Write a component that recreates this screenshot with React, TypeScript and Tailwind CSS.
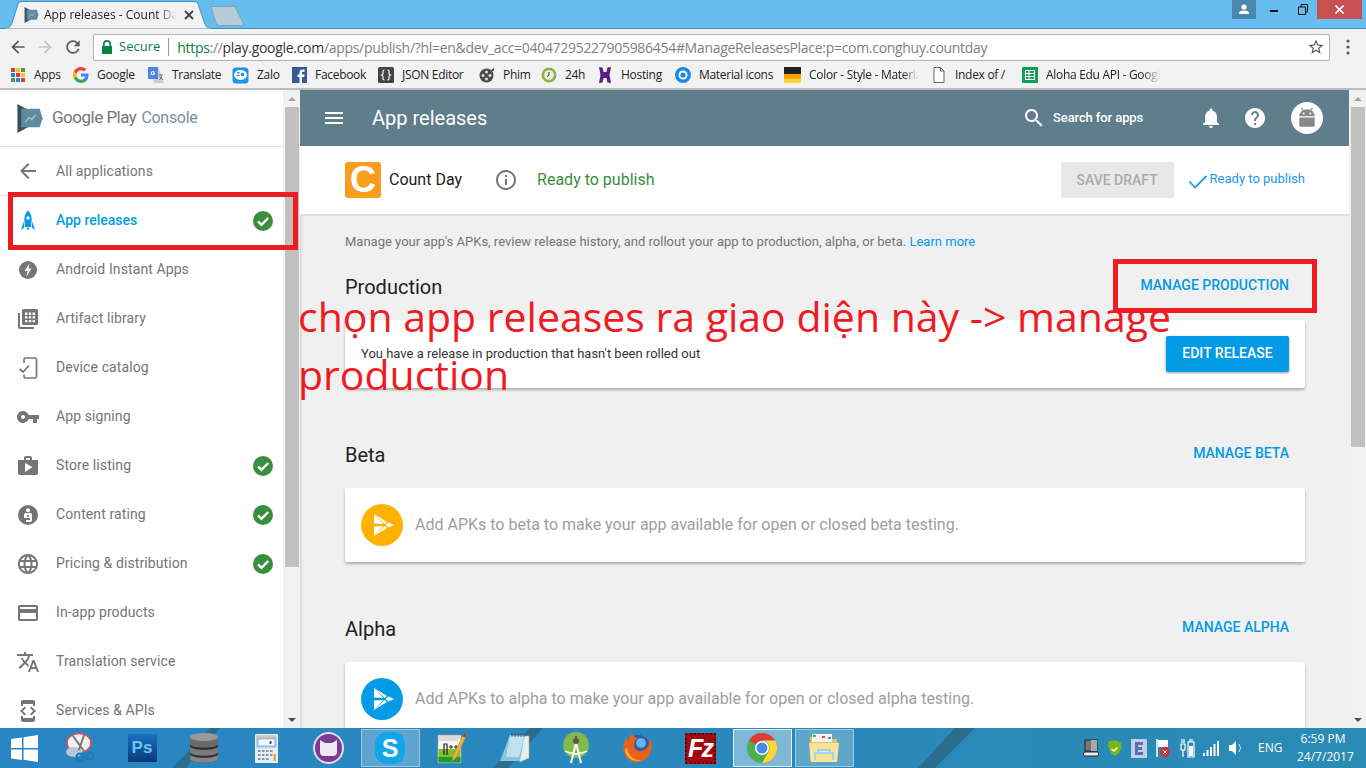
import { ReactNode } from "react";

const ui = "font-['Open_Sans','Noto_Sans',sans-serif]";
const roboto = "font-['Roboto',sans-serif]";

function Md({ d, className = "", size = 24 }: { d: string; className?: string; size?: number }) {
  return (
    <svg width={size} height={size} viewBox="0 0 24 24" fill="currentColor" className={className}>
      <path d={d} />
    </svg>
  );
}

const paths = {
  back: "M20 11H7.83l5.59-5.59L12 4l-8 8 8 8 1.41-1.41L7.83 13H20v-2z",
  key: "M12.65 10C11.83 7.67 9.61 6 7 6c-3.31 0-6 2.69-6 6s2.69 6 6 6c2.61 0 4.83-1.67 5.65-4H17v4h4v-4h2v-4H12.65zM7 14c-1.1 0-2-.9-2-2s.9-2 2-2 2 .9 2 2-.9 2-2 2z",
  shop: "M16 6V4c0-1.11-.89-2-2-2h-4c-1.11 0-2 .89-2 2v2H2v13c0 1.11.89 2 2 2h16c1.11 0 2-.89 2-2V6h-6zm-6-2h4v2h-4V4zM9 18V9l7.5 4L9 18z",
  globe:
    "M11.99 2C6.47 2 2 6.48 2 12s4.47 10 9.99 10C17.52 22 22 17.52 22 12S17.52 2 11.99 2zm6.93 6h-2.95c-.32-1.25-.78-2.45-1.38-3.56 1.84.63 3.37 1.91 4.33 3.56zM12 4.04c.83 1.2 1.48 2.53 1.91 3.96h-3.82c.43-1.43 1.08-2.76 1.91-3.96zM4.26 14C4.1 13.36 4 12.69 4 12s.1-1.36.26-2h3.38c-.08.66-.14 1.32-.14 2 0 .68.06 1.34.14 2H4.26zm.82 2h2.95c.32 1.25.78 2.45 1.38 3.56-1.84-.63-3.37-1.9-4.33-3.56zm2.95-8H5.08c.96-1.66 2.49-2.93 4.33-3.56C8.81 5.55 8.35 6.75 8.03 8zM12 19.96c-.83-1.2-1.48-2.53-1.91-3.96h3.82c-.43 1.43-1.08 2.76-1.91 3.96zM14.34 14H9.66c-.09-.66-.16-1.32-.16-2 0-.68.07-1.35.16-2h4.68c.09.65.16 1.32.16 2 0 .68-.07 1.34-.16 2zm.25 5.56c.6-1.11 1.06-2.31 1.38-3.56h2.95c-.96 1.65-2.49 2.93-4.33 3.56zM16.36 14c.08-.66.14-1.32.14-2 0-.68-.06-1.34-.14-2h3.38c.16.64.26 1.31.26 2s-.1 1.36-.26 2h-3.38z",
  card: "M20 4H4c-1.11 0-1.99.89-1.99 2L2 18c0 1.11.89 2 2 2h16c1.11 0 2-.89 2-2V6c0-1.11-.89-2-2-2zm0 14H4v-6h16v6zm0-10H4V6h16v2z",
  translate:
    "M12.87 15.07l-2.54-2.51.03-.03c1.74-1.94 2.98-4.17 3.71-6.53H17V4h-7V2H8v2H1v1.99h11.17C11.5 7.92 10.44 9.75 9 11.35 8.07 10.32 7.3 9.19 6.69 8h-2c.73 1.63 1.73 3.17 2.98 4.56l-5.09 5.02L4 19l5-5 3.11 3.11.76-2.04zM18.5 10h-2L12 22h2l1.12-3h4.75L21 22h2l-4.5-12zm-2.62 7l1.62-4.33L19.12 17h-3.24z",
  dev: "M7 5h10v2h2V3c0-1.1-.9-1.99-2-1.99L7 1c-1.1 0-2 .9-2 2v4h2V5zm8.41 11.59L20 12l-4.59-4.59L14 8.83 17.17 12 14 15.17l1.41 1.42zM10 15.17L6.83 12 10 8.83 8.59 7.41 4 12l4.59 4.59L10 15.17zM17 19H7v-2H5v4c0 1.1.9 2 2 2h10c1.1 0 2-.9 2-2v-4h-2v2z",
  menu: "M3 18h18v-2H3v2zm0-5h18v-2H3v2zm0-7v2h18V6H3z",
  search:
    "M15.5 14h-.79l-.28-.27C15.41 12.59 16 11.11 16 9.5 16 5.91 13.09 3 9.5 3S3 5.91 3 9.5 5.91 16 9.5 16c1.61 0 3.09-.59 4.23-1.57l.27.28v.79l5 4.99L20.49 19l-4.99-5zm-6 0C7.01 14 5 11.99 5 9.5S7.01 5 9.5 5 14 7.01 14 9.5 11.99 14 9.5 14z",
  bell: "M12 22c1.1 0 2-.9 2-2h-4c0 1.1.89 2 2 2zm6-6v-5c0-3.07-1.64-5.64-4.5-6.32V4c0-.83-.67-1.5-1.5-1.5s-1.5.67-1.5 1.5v.68C7.63 5.36 6 7.92 6 11v5l-2 2v1h16v-1l-2-2z",
  help: "M12 2C6.48 2 2 6.48 2 12s4.48 10 10 10 10-4.48 10-10S17.52 2 12 2zm1 17h-2v-2h2v2zm2.07-7.75l-.9.92C13.45 12.9 13 13.5 13 15h-2v-.5c0-1.1.45-2.1 1.17-2.83l1.24-1.26c.37-.36.59-.86.59-1.41 0-1.1-.9-2-2-2s-2 .9-2 2H8c0-2.21 1.79-4 4-4s4 1.79 4 4c0 .88-.36 1.68-.93 2.25z",
  info: "M11 17h2v-6h-2v6zm1-15C6.48 2 2 6.48 2 12s4.48 10 10 10 10-4.48 10-10S17.52 2 12 2zm0 18c-4.41 0-8-3.59-8-8s3.59-8 8-8 8 3.59 8 8-3.59 8-8 8zM11 9h2V7h-2v2z",
  reload:
    "M17.65 6.35C16.2 4.9 14.21 4 12 4c-4.42 0-7.99 3.58-7.99 8s3.57 8 7.99 8c3.73 0 6.84-2.55 7.73-6h-2.08c-.82 2.33-3.04 4-5.65 4-3.31 0-6-2.69-6-6s2.69-6 6-6c1.66 0 3.14.69 4.22 1.78L13 11h7V4l-2.35 2.35z",
  arrowFwd: "M12 4l-1.41 1.41L16.17 11H4v2h12.17l-5.58 5.59L12 20l8-8z",
  star: "M22 9.24l-7.19-.62L12 2 9.19 8.63 2 9.24l5.46 4.73L5.82 21 12 17.27 18.18 21l-1.63-7.03L22 9.24zM12 15.4l-3.76 2.27 1-4.28-3.32-2.88 4.38-.38L12 6.1l1.71 4.04 4.38.38-3.32 2.88 1 4.28L12 15.4z",
};

function PlayLogo({ className }: { className: string }) {
  return (
    <svg viewBox="0 0 26 30" className={className}>
      <path d="M0 0 L26 14.5 L26 15.5 L0 30 Z" fill="#37505e" />
      <path d="M4 5 L23 5 L26 15 L23 24 L4 24 Z" fill="#5f8aa0" />
      <path d="M8 19 L12 14 L15 16 L19 11" fill="none" stroke="#9cc0d0" strokeWidth="1.6" />
    </svg>
  );
}

function RocketIcon() {
  return (
    <svg width="24" height="24" viewBox="0 0 24 24" fill="#039be5">
      <path d="M12 1.5 C15 4 16 8 15.6 12 L15 18 H9 L8.4 12 C8 8 9 4 12 1.5Z" />
      <circle cx="12" cy="9" r="1.7" fill="#fff" />
      <path d="M7.6 12.5 L8.4 18.5 L5 21 Z M16.4 12.5 L15.6 18.5 L19 21 Z M10.4 19 H13.6 L12 21.5 Z" />
    </svg>
  );
}

function BoltIcon() {
  return (
    <svg width="24" height="24" viewBox="0 0 24 24">
      <circle cx="12" cy="12" r="9" fill="#757575" />
      <path d="M13.5 5.5 L8.5 13 H11.5 L10.5 18.5 L15.5 10.5 H12.5 Z" fill="#fff" />
    </svg>
  );
}

function LibraryIcon() {
  return (
    <svg width="24" height="24" viewBox="0 0 24 24">
      <path d="M4 6H2v14c0 1.1.9 2 2 2h14v-2H4V6z" fill="#757575" />
      <rect x="6" y="2" width="16" height="16" rx="1.5" fill="#757575" />
      <path d="M9 5.5h2.4v2.4H9zM12.8 5.5h2.4v2.4h-2.4zM16.6 5.5H19v2.4h-2.4zM9 9.2h2.4v2.4H9zM12.8 9.2h2.4v2.4h-2.4zM16.6 9.2H19v2.4h-2.4zM9 12.9h2.4v2.4H9zM12.8 12.9h2.4v2.4h-2.4zM16.6 12.9H19v2.4h-2.4z" fill="#fff" />
    </svg>
  );
}

function DeviceIcon() {
  return (
    <svg width="24" height="24" viewBox="0 0 24 24" fill="none" stroke="#757575" strokeWidth="1.7">
      <path d="M8 7V3.5 C8 2.8 8.5 2 9.5 2 H19 C20 2 20.5 2.8 20.5 3.5 V20.5 C20.5 21.3 20 22 19 22 H9.5 C8.5 22 8 21.3 8 20.5 V18.5" />
      <path d="M3.5 13 L7 16 L13 9.5" />
    </svg>
  );
}

function RatingIcon() {
  return (
    <svg width="24" height="24" viewBox="0 0 24 24">
      <circle cx="12" cy="12" r="10" fill="#757575" />
      <circle cx="12" cy="7.2" r="2" fill="#fff" />
      <path d="M8 15 V11.5 C8 10.5 9 10 10 10 H14 C15 10 16 10.5 16 11.5 V17 C16 18.5 15 19 14 19 H10 V17 H14 V15 Z" fill="#fff" />
      <circle cx="12" cy="13" r="1.1" fill="#757575" />
    </svg>
  );
}

function CheckBadge() {
  return (
    <svg width="20" height="20" viewBox="0 0 20 20">
      <circle cx="10" cy="10" r="10" fill="#388e3c" />
      <path d="M5 10.4 L8.5 13.8 L15.2 7" fill="none" stroke="#fff" strokeWidth="2.4" />
    </svg>
  );
}

function PlayBadge({ color }: { color: string }) {
  return (
    <svg width="42" height="42" viewBox="0 0 42 42" className="shrink-0">
      <circle cx="21" cy="21" r="21" fill={color} />
      <path d="M13 10 L22.5 20 L13 19.5 Z M13 32 L22.5 22 L13 22.5 Z M13 10 L26 18 L23.8 20 Z M13 32 L26 24 L23.8 22 Z M24.5 21 L27.5 18.5 L33 21 L27.5 23.5 Z" fill="#fff" />
    </svg>
  );
}

const sideItems: { label: string; icon: ReactNode; done?: boolean }[] = [
  { label: "Android Instant Apps", icon: <BoltIcon /> },
  { label: "Artifact library", icon: <LibraryIcon /> },
  { label: "Device catalog", icon: <DeviceIcon /> },
  { label: "App signing", icon: <Md d={paths.key} /> },
  { label: "Store listing", icon: <Md d={paths.shop} />, done: true },
  { label: "Content rating", icon: <RatingIcon />, done: true },
  { label: "Pricing & distribution", icon: <Md d={paths.globe} />, done: true },
  { label: "In-app products", icon: <Md d={paths.card} /> },
  { label: "Translation service", icon: <Md d={paths.translate} /> },
  { label: "Services & APIs", icon: <Md d={paths.dev} /> },
];

function Svg16({ children }: { children: ReactNode }) {
  return (
    <svg width="16" height="16" viewBox="0 0 16 16" className="shrink-0">
      {children}
    </svg>
  );
}

const bookmarks: { label: string; w: string; icon: ReactNode; fade?: boolean }[] = [
  {
    label: "Apps",
    w: "w-[27px]",
    icon: (
      <Svg16>
        <path d="M1 1h4v4H1z" fill="#e53935" />
        <path d="M6 1h4v4H6z" fill="#fbc02d" />
        <path d="M11 1h4v4h-4z" fill="#43a047" />
        <path d="M1 6h4v4H1z" fill="#1e88e5" />
        <path d="M6 6h4v4H6z" fill="#e53935" />
        <path d="M11 6h4v4h-4z" fill="#fbc02d" />
        <path d="M1 11h4v4H1z" fill="#43a047" />
        <path d="M6 11h4v4H6z" fill="#1e88e5" />
        <path d="M11 11h4v4h-4z" fill="#e53935" />
      </Svg16>
    ),
  },
  {
    label: "Google",
    w: "w-[39px]",
    icon: (
      <Svg16>
        <path d="M15.5 8.2c0-.6-.1-1.1-.2-1.6H8v3h4.2c-.2 1-.7 1.8-1.6 2.4v2h2.6c1.5-1.4 2.3-3.4 2.3-5.8z" fill="#4285f4" />
        <path d="M8 16c2.2 0 4-.7 5.2-2l-2.6-2c-.7.5-1.5.8-2.6.8-2 0-3.8-1.4-4.4-3.2H.9v2C2.2 14.2 4.9 16 8 16z" fill="#34a853" />
        <path d="M3.6 9.6c-.3-1-.3-2.2 0-3.2v-2H.9c-1.2 2.2-1.2 5 0 7.2z" fill="#fbbc05" />
        <path d="M8 3.2c1.2 0 2.2.4 3 1.2l2.3-2.3C11.9.8 10.1 0 8 0 4.9 0 2.2 1.8.9 4.4l2.7 2c.6-1.8 2.4-3.2 4.4-3.2z" fill="#ea4335" />
      </Svg16>
    ),
  },
  {
    label: "Translate",
    w: "w-[48px]",
    icon: (
      <Svg16>
        <path d="M0 0h10l6 16H6z" fill="#c9ccd1" />
        <path d="M0 0h10v12H0z" fill="#4a86e8" />
        <path d="M7 5.5H5v1.2h1c-.2.7-1.8.8-2 0-.4-1 .2-2 1-2 .4 0 .7.1.9.3l.8-.7C5.2 3.4 3 4 2.8 6 2.7 8 5 9 6.3 7.7 7 7 7 6.3 7 5.5z" fill="#fff" />
        <path d="M11 8h4M13 7v1M11.5 13l2.5-4M12 9.5l3 3.5" stroke="#666" strokeWidth=".9" fill="none" />
      </Svg16>
    ),
  },
  {
    label: "Zalo",
    w: "w-[22px]",
    icon: (
      <svg width="17" height="17" viewBox="0 0 17 17" className="shrink-0">
        <rect x=".5" y=".5" width="16" height="16" rx="3.5" fill="#1b96e8" />
        <ellipse cx="8.5" cy="8" rx="6.5" ry="5" fill="#fff" />
        <path d="M5 5h3L6 8h2v1H4.5l2-3H5z" fill="#1b96e8" />
        <path d="M9 6h3v3H9z" fill="#1b96e8" />
      </svg>
    ),
  },
  {
    label: "Facebook",
    w: "w-[51px]",
    icon: (
      <Svg16>
        <rect x="1" y="0" width="15" height="16" fill="#3b5998" />
        <path d="M11 16V10h2.2l.3-2.5H11V6c0-.8.3-1.2 1.2-1.2h1.4V2.5h-2C9.5 2.5 8.5 3.7 8.5 5.7v1.8h-2V10h2v6z" fill="#fff" />
      </Svg16>
    ),
  },
  {
    label: "JSON Editor",
    w: "w-[65px]",
    icon: (
      <Svg16>
        <rect width="16" height="16" rx="1.5" fill="#444" />
        <path d="M6.5 3c-2 0-1.500 1.500-1.500 3 0 1-.5 1.800-1.200 2 .7.200 1.200 1 1.200 2 0 1.500-.5 3 1.500 3M9.500 3c2 0 1.500 1.500 1.500 3 0 1 .5 1.800 1.200 2-.7.200-1.200 1-1.200 2 0 1.500.5 3-1.500 3" fill="none" stroke="#fff" strokeWidth="1.2" />
      </Svg16>
    ),
  },
  {
    label: "Phim",
    w: "w-[26px]",
    icon: (
      <Svg16>
        <circle cx="7.5" cy="8.5" r="7" fill="#4a4a4a" />
        <circle cx="7.5" cy="5" r="1.5" fill="#ddd" />
        <circle cx="7.5" cy="12" r="1.5" fill="#ddd" />
        <circle cx="4" cy="8.5" r="1.5" fill="#ddd" />
        <circle cx="11" cy="8.5" r="1.5" fill="#ddd" />
        <path d="M12 3l3-2v2.5l-2 1z" fill="#4a4a4a" />
      </Svg16>
    ),
  },
  {
    label: "24h",
    w: "w-[20px]",
    icon: (
      <Svg16>
        <circle cx="8" cy="8" r="7.5" fill="#8bb547" />
        <circle cx="8" cy="8" r="4.8" fill="#f0f2e4" />
        <path d="M8 5v3.2l-2 1.2" stroke="#333" fill="none" />
      </Svg16>
    ),
  },
  {
    label: "Hosting",
    w: "w-[42px]",
    icon: (
      <Svg16>
        <path d="M2 0l3.5.5L6.500 5h3l1-4.500L14 0l-1.500 8L14 16l-3.500-.5-1-4.500h-3l-1 4.500L2 16l1.500-8z" fill="#5b1f8a" />
      </Svg16>
    ),
  },
  {
    label: "Material icons",
    w: "w-[73px]",
    icon: (
      <Svg16>
        <circle cx="8" cy="8" r="8" fill="#1e88e5" />
        <circle cx="8" cy="8" r="4.5" fill="#fff" />
        <circle cx="8" cy="8" r="2.6" fill="#1e88e5" />
      </Svg16>
    ),
  },
  {
    label: "Color - Style - Material",
    w: "w-[110px]",
    fade: true,
    icon: (
      <svg width="17" height="16" viewBox="0 0 17 16" className="shrink-0">
        <path d="M0 0h17v7H0z" fill="#212121" />
        <path d="M0 7h17v5H0z" fill="#ffa000" />
        <path d="M0 12h17v4H0z" fill="#fdd835" />
      </svg>
    ),
  },
  {
    label: "Index of /",
    w: "w-[55px]",
    icon: (
      <Svg16>
        <path d="M3 .5h6.5L13 4v11.500H3zM9.500.5V4H13" fill="#fff" stroke="#666" />
      </Svg16>
    ),
  },
  {
    label: "Aloha Edu API - Google Sheets",
    w: "w-[114px]",
    fade: true,
    icon: (
      <Svg16>
        <rect width="16" height="16" rx="1" fill="#0f9d58" />
        <path d="M3.5 3.5h9v9h-9zM3.5 6.500h9M3.500 9.500h9M7 3.500v9" fill="none" stroke="#fff" strokeWidth="1.1" />
      </Svg16>
    ),
  },
];

function TitleBar() {
  return (
    <div className="h-[29px] shrink-0 bg-[#66bdf0] border-b border-[#4a8db5] flex relative">
      <div className="ml-[5px] mt-[1px] w-[207px] h-[28px] relative z-10">
        <svg width="207" height="28" viewBox="0 0 207 28" className="absolute left-0 top-0">
          <path d="M0 27.5 C4 27.5 6 25 7 22 L13 3 Q14 .5 17 .5 L189 .5 Q192 .5 193 3 L200 23 Q201.5 27.5 206 27.5 Z" fill="#f2f2f2" stroke="#4a8db5" />
          <path d="M1 28H205" stroke="#f2f2f2" />
        </svg>
        <div className="relative flex items-center h-full pl-[19px]">
          <PlayLogo className="w-[15px] h-[16px] shrink-0" />
          <span className={`${ui} text-[12px] text-[#222] ml-[5px] w-[133px] whitespace-nowrap overflow-hidden [mask-image:linear-gradient(to_right,black_85%,transparent)]`}>
            App releases - Count Day
          </span>
          <svg width="10" height="10" viewBox="0 0 10 10" className="ml-[7px]">
            <path d="M1 1l8 8M9 1l-8 8" stroke="#444" strokeWidth="1.8" />
          </svg>
        </div>
      </div>
      <svg width="36" height="20" viewBox="0 0 36 20" className="ml-[-2px] mt-[6px]">
        <path d="M1 .5H23Q25 .5 26 2.5L33 17Q34 19.5 31 19.5H9Q7 19.5 6 17Z" fill="#b6cbd9" stroke="#7da3bb" />
      </svg>
      <div className="ml-auto flex items-start">
        <div className="w-[24px] h-[19px] bg-[#4a89ad] flex items-center justify-center">
          <svg width="10" height="11" viewBox="0 0 10 11" fill="#fff">
            <circle cx="5" cy="3" r="2.6" />
            <path d="M0 10c0-3 2-3.5 5-3.5s5 .5 5 3.5z" />
          </svg>
        </div>
        <div className="w-[30px] h-[19px] ml-[3px] flex items-center justify-center">
          <div className="w-[8px] h-[2px] bg-[#111] mt-[3px]" />
        </div>
        <div className="w-[28px] h-[19px] flex items-center justify-center">
          <svg width="10" height="11" viewBox="0 0 10 11" fill="none" stroke="#111">
            <path d="M.5 3h7v7.5h-7zM3 3V.5h6.500V8H8" />
          </svg>
        </div>
        <div className="w-[45px] h-[19px] mr-[4px] bg-[#c75050] flex items-center justify-center">
          <svg width="9" height="9" viewBox="0 0 9 9">
            <path d="M.5.5l8 8M8.5.5l-8 8" stroke="#fff" strokeWidth="1.6" />
          </svg>
        </div>
      </div>
    </div>
  );
}

function Toolbar() {
  return (
    <div className="h-[33px] shrink-0 bg-[#f2f2f2] flex items-center relative pt-[3px]">
      <Md d={paths.back} size={20} className="ml-[8px] text-[#5a5a5a]" />
      <Md d={paths.arrowFwd} size={20} className="ml-[7px] text-[#c4c4c4]" />
      <Md d={paths.reload} size={20} className="ml-[8px] text-[#5a5a5a]" />
      <div className="ml-[10px] w-[1237px] h-[27px] bg-white border border-[#b4b4b4] rounded-[2px] flex items-center">
        <svg width="12" height="14" viewBox="0 0 12 14" className="ml-[7px] shrink-0" fill="#0b8043">
          <path d="M2 6V4a4 4 0 0 1 8 0v2h1v8H1V6zm1.7 0h4.6V4a2.3 2.3 0 0 0-4.600 0z" />
        </svg>
        <span className={`${ui} text-[13px] text-[#0b8043] ml-[6px]`}>Secure</span>
        <div className="w-px h-[18px] bg-[#9a9a9a] ml-[8px]" />
        <span className={`${ui} text-[14px] tracking-[-0.3px] text-[#808080] ml-[8px] whitespace-nowrap`}>
          <span className="text-[#0b8043]">https</span>://<span className="text-[#333]">play.google.com</span>/apps/publish/?hl=en&amp;dev_acc=04047295227905986454#ManageReleasesPlace:p=com.conghuy.countday
        </span>
        <Md d={paths.star} size={18} className="ml-auto mr-[4px] text-[#5a5a5a]" />
      </div>
      <svg width="4" height="16" viewBox="0 0 4 16" fill="#5a5a5a" className="ml-[16px]">
        <circle cx="2" cy="2" r="1.6" />
        <circle cx="2" cy="8" r="1.6" />
        <circle cx="2" cy="14" r="1.6" />
      </svg>
    </div>
  );
}

function BookmarksBar() {
  return (
    <div className="h-[28px] shrink-0 bg-[#f2f2f2] border-b-2 border-[#bdbdbd] flex items-center pl-[10px] gap-[12px]">
      {bookmarks.map((b) => (
        <div key={b.label} className="flex items-center gap-[8px]">
          {b.icon}
          <span
            className={`${ui} text-[12px] tracking-[-0.3px] text-[#222] whitespace-nowrap ${b.w} ${
              b.fade ? "overflow-hidden [mask-image:linear-gradient(to_right,black_85%,transparent)]" : ""
            }`}
          >
            {b.label}
          </span>
        </div>
      ))}
    </div>
  );
}

function Scrollbar({ thumb }: { thumb: string }) {
  return (
    <div className="w-[17px] shrink-0 bg-[#f1f1f1] flex flex-col items-center">
      <div className="h-[17px] flex items-center justify-center">
        <div className="w-0 h-0 border-x-[4px] border-x-transparent border-b-[4px] border-b-[#a3a3a3]" />
      </div>
      <div className={`w-[14px] bg-[#c1c1c1] ${thumb}`} />
      <div className="flex-1" />
      <div className="h-[17px] flex items-center justify-center">
        <div className="w-0 h-0 border-x-[4px] border-x-transparent border-t-[4px] border-t-[#505050]" />
      </div>
    </div>
  );
}

function SideRow({ label, icon, done, active }: { label: string; icon: ReactNode; done?: boolean; active?: boolean }) {
  return (
    <div className="h-[49px] shrink-0 flex items-center pl-[16px] pr-[10px]">
      <div className="w-[24px] h-[24px] shrink-0 text-[#757575]">{icon}</div>
      <span className={`ml-[16px] text-[14px] ${active ? "text-[#039be5] font-medium" : "text-[#757575] tracking-[0.1px]"}`}>{label}</span>
      {done && <div className="ml-auto"><CheckBadge /></div>}
    </div>
  );
}

function Sidebar() {
  return (
    <div className={`${roboto} w-[300px] shrink-0 flex bg-white`}>
      <div className="w-[283px] flex flex-col overflow-hidden">
        <div className="h-[57px] shrink-0 border-b border-[#e0e0e0] flex items-center pl-[17px]">
          <PlayLogo className="w-[26px] h-[29px] shrink-0" />
          <span className="ml-[9px] text-[17px] tracking-[-0.5px] text-[#757575]">Google Play</span>
          <span className="ml-[5px] text-[16px] tracking-[-0.3px] text-[#78909c]">Console</span>
        </div>
        <div className="h-[49px] shrink-0 border-b border-[#e0e0e0] flex items-center pl-[16px]">
          <Md d={paths.back} className="text-[#757575]" />
          <span className="ml-[16px] text-[14px] tracking-[0.1px] text-[#757575]">All applications</span>
        </div>
        <SideRow label="App releases" icon={<RocketIcon />} done active />
        {sideItems.map((i) => (
          <SideRow key={i.label} {...i} />
        ))}
      </div>
      <Scrollbar thumb="h-[460px]" />
    </div>
  );
}

function Section({ title, manage, gap, children }: { title: string; manage: string; gap: string; children: ReactNode }) {
  return (
    <div className={gap}>
      <div className="h-[24px] flex items-center justify-between pr-[16px]">
        <span className="text-[20px] text-[#212121] relative top-px">{title}</span>
        <span className="text-[14px] font-medium text-[#039be5] mb-[2px]">{manage}</span>
      </div>
      <div className="mt-[22px] bg-white rounded-[2px] shadow-[0_2px_3px_rgba(0,0,0,0.28)] flex items-center px-[16px]">
        {children}
      </div>
    </div>
  );
}

function Main() {
  return (
    <div className={`${roboto} flex-1 min-w-0 flex flex-col bg-[#f0f0f0] shadow-[inset_3px_0_3px_-2px_rgba(0,0,0,0.15)]`}>
      <div className="h-[56px] shrink-0 bg-[#607d8b] flex items-center pl-[22px] pr-[26px] text-white">
        <Md d={paths.menu} />
        <span className="ml-[26px] text-[20px]">App releases</span>
        <Md d={paths.search} className="ml-auto" />
        <span className="ml-[7px] text-[13px] font-medium tracking-[-0.1px] w-[91px]">Search for apps</span>
        <Md d={paths.bell} className="ml-[55px]" />
        <Md d={paths.help} className="ml-[20px]" />
        <div className="ml-[24px] w-[32px] h-[32px] rounded-full bg-white flex items-center justify-center">
          <svg width="22" height="22" viewBox="0 0 20 20" fill="#888">
            <path d="M3 8.5a7 6.5 0 0 1 14 0z" />
            <path d="M3 9.5h14v7q0 1.5-1.5 1.5h-11Q3 18 3 16.5z" />
            <path d="M5 .8l2 3M15 .8l-2 3" stroke="#888" />
            <circle cx="7" cy="6" r=".9" fill="#fff" />
            <circle cx="13" cy="6" r=".9" fill="#fff" />
          </svg>
        </div>
      </div>
      <div className="h-[70px] shrink-0 bg-white border-b-2 border-[#e0e0e0] flex items-center pl-[45px] pr-[44px]">
        <div className="w-[36px] h-[36px] rounded-[3px] bg-[#f99d1f] flex items-center justify-center overflow-hidden">
          <span className="font-['Liberation_Sans',sans-serif] font-bold text-[36px] leading-none text-white">C</span>
        </div>
        <span className="ml-[8px] text-[16px] text-[#212121]">Count Day</span>
        <Md d={paths.info} className="ml-[32px] text-[#757575]" />
        <span className="ml-[19px] text-[16px] text-[#388e3c]">Ready to publish</span>
        <div className="ml-auto w-[113px] h-[36px] rounded-[2px] bg-[#e8e8e8] flex items-center justify-center text-[14px] font-medium text-[#aaaaaa]">
          SAVE DRAFT
        </div>
        <svg width="20" height="20" viewBox="0 0 20 20" className="ml-[14px] mt-[2px]" fill="none" stroke="#2196f3" strokeWidth="1.8">
          <path d="M1.5 10.5 L7 16.5 L18.5 5" />
        </svg>
        <span className="ml-[2px] text-[13px] text-[#2196f3] mb-[2px]">Ready to publish</span>
      </div>
      <div className="pl-[45px] pr-[44px] pt-[18px] overflow-hidden flex-1">
        <div className="text-[13px] leading-[16px] text-[#757575]">
          Manage your app's APKs, review release history, and rollout your app to production, alpha, or beta.{" "}
          <span className="text-[#039be5]">Learn more</span>
        </div>
        <Section title="Production" manage="MANAGE PRODUCTION" gap="mt-[24px]">
          <div className="h-[68px] w-full flex items-center justify-between">
            <span className="text-[13px] text-[#333]">You have a release in production that hasn't been rolled out</span>
            <div className="w-[123px] h-[36px] rounded-[2px] bg-[#039be5] shadow-[0_1px_3px_rgba(0,0,0,0.4)] flex items-center justify-center pb-[2px] text-[14px] font-medium text-white">
              EDIT RELEASE
            </div>
          </div>
        </Section>
        <Section title="Beta" manage="MANAGE BETA" gap="mt-[54px]">
          <div className="h-[74px] flex items-center gap-[12px]">
            <PlayBadge color="#ffb300" />
            <span className="text-[16px] text-[#9e9e9e]">Add APKs to beta to make your app available for open or closed beta testing.</span>
          </div>
        </Section>
        <Section title="Alpha" manage="MANAGE ALPHA" gap="mt-[54px]">
          <div className="h-[74px] flex items-center gap-[12px]">
            <PlayBadge color="#039be5" />
            <span className="text-[16px] text-[#9e9e9e]">Add APKs to alpha to make your app available for open or closed alpha testing.</span>
          </div>
        </Section>
      </div>
    </div>
  );
}

const taskIcons: { key: string; active?: "skype" | "chrome" | "explorer"; icon: ReactNode }[] = [
  {
    key: "snip",
    icon: (
      <svg width="32" height="32" viewBox="0 0 32 32">
        <ellipse cx="15" cy="11" rx="12" ry="9.5" fill="#f2f2f2" stroke="#d9534f" strokeWidth="1.5" />
        <ellipse cx="10" cy="20" rx="8" ry="5" fill="#b9c6dc" />
        <path d="M9 4l11 15M20 3l-5 15" stroke="#777" strokeWidth="2" />
        <circle cx="16" cy="25" r="3.5" fill="none" stroke="#2277b5" strokeWidth="2" />
        <circle cx="26" cy="24" r="3.5" fill="none" stroke="#2277b5" strokeWidth="2" />
      </svg>
    ),
  },
  {
    key: "ps",
    icon: (
      <div className="w-[29px] h-[28px] rounded-[1px] bg-linear-to-b from-[#1a6fc2] to-[#0a3a78] flex items-center justify-center">
        <span className="font-['Liberation_Sans',sans-serif] font-bold text-[17px] text-[#68c4f5]">Ps</span>
      </div>
    ),
  },
  {
    key: "db",
    icon: (
      <svg width="32" height="32" viewBox="0 0 32 32">
        <path d="M2 5v22c0 5 28 5 28 0V5z" fill="#2b2b2b" />
        <path d="M2 5v7c0 5 28 5 28 0V5z" fill="#6a6a6a" />
        <ellipse cx="16" cy="5" rx="14" ry="4" fill="#9a9a9a" />
        <path d="M2 14c0 5 28 5 28 0v6c0 5-28 5-28 0z" fill="#7a7a7a" />
        <path d="M2 22c0 5 28 5 28 0v5c0 5-28 5-28 0z" fill="#858585" />
      </svg>
    ),
  },
  {
    key: "calc",
    icon: (
      <svg width="23" height="29" viewBox="0 0 23 29">
        <rect width="23" height="29" rx="1" fill="#e8eef3" />
        <rect x="1.5" y="1.5" width="20" height="12" fill="#8cc0e8" />
        <path d="M1.5 1.5h20v2h-20z" fill="#f2c48a" />
        <rect x="3.5" y="5.5" width="16" height="6" fill="#f4f8fb" />
        <path d="M14.5 7h2v3h-2z" fill="#555" />
        <path d="M3 16h2.5v2H3zM7 16h2.5v2H7zM11 16h2.5v2H11zM15 16h2.5v2H15zM3 20h2.5v2H3zM7 20h2.5v2H7zM11 20h2.5v2H11zM15 20h2.5v2H15zM3 24h2.5v2H3zM7 24h2.5v2H7zM11 24h2.5v2H11z" fill="#7c98ae" />
        <path d="M18.5 20H21v7h-2.5z" fill="#f2a24a" />
      </svg>
    ),
  },
  {
    key: "cat",
    icon: (
      <svg width="31" height="32" viewBox="0 0 31 32">
        <ellipse cx="15.5" cy="16" rx="15.5" ry="16" fill="#e3dce8" />
        <ellipse cx="15.5" cy="16" rx="13.5" ry="14" fill="#7a3b93" />
        <path d="M7 8l5 3h7l5-3v12q0 4-4 4h-9q-4 0-4-4z" fill="#eee8f2" />
      </svg>
    ),
  },
  {
    key: "skype",
    active: "skype",
    icon: (
      <div className="w-[30px] h-[32px] rounded-[12px] bg-[#12a5ea] flex items-center justify-center">
        <span className="font-['Liberation_Sans',sans-serif] font-bold text-[25px] leading-none text-white">S</span>
      </div>
    ),
  },
  {
    key: "npp",
    icon: (
      <svg width="30" height="32" viewBox="0 0 30 32">
        <path d="M1 3h23v28H1z" fill="#f7f7ef" stroke="#aaa" strokeWidth=".6" />
        <path d="M2 4h21M2 6h21M2 8h19" stroke="#aaa" strokeWidth=".7" />
        <path d="M1.5 17h22v13.5h-22z" fill="#7fc32c" />
        <path d="M1.5 25h22v5.5h-22z" fill="#1f9a33" />
        <path d="M7 23V12h3v11" stroke="#222" strokeWidth="1.2" fill="none" />
        <path d="M12 15h4M14 13v4M17 15h4M19 13v4" stroke="#222" strokeWidth="1" />
        <path d="M27 1L16 24l-1 5 4-3L29.5 3z" fill="#f0b429" stroke="#a85" strokeWidth=".6" />
        <path d="M27 1l2.5 2-1.2 2.5L25.5 4.3z" fill="#a8442f" />
      </svg>
    ),
  },
  {
    key: "notepad",
    icon: (
      <svg width="32" height="32" viewBox="0 0 32 32">
        <path d="M12 4h19v22l-9 4z" fill="#e9eef2" stroke="#b0a98a" strokeWidth=".6" />
        <path d="M12 3h15l-5 26H2z" fill="#86c6dd" />
        <path d="M12 3h15l-6 22H8z" fill="#bfe2ee" />
        <path d="M13 3h14M14 1v4M17 1v4M20 1v4M23 1v4M26 1v4" stroke="#385a6e" strokeWidth=".9" />
      </svg>
    ),
  },
  {
    key: "android",
    icon: (
      <svg width="28" height="32" viewBox="0 0 28 32">
        <circle cx="14" cy="13" r="13" fill="#83b84b" />
        <path d="M9 31l5-20 5 20" fill="none" stroke="#f4f4f4" strokeWidth="2.2" />
        <path d="M3 19q11 6 22 0" fill="none" stroke="#f4f4f4" strokeWidth="1.8" />
        <circle cx="14" cy="9" r="3" fill="#555" />
        <path d="M14 4v3" stroke="#555" strokeWidth="2" />
      </svg>
    ),
  },
  {
    key: "firefox",
    icon: (
      <svg width="30" height="32" viewBox="0 0 30 32">
        <circle cx="15" cy="15" r="12" fill="#2a5aa8" />
        <circle cx="18" cy="11" r="5" fill="#5fb4ea" />
        <path d="M9 2C11 5 15 6 15 6 10 9 10 15 14 18 19 21 25 17 26 11 27 9 27 7 26 5 30 11 30 18 25 25 19 32 9 32 4 26-1 20-1 11 4 5L5 9C6 6 7 4 9 2z" fill="#e8601d" />
        <path d="M4 15C4 22 10 29 18 28 11 31 3 26 2 18z" fill="#f9b233" />
      </svg>
    ),
  },
  {
    key: "filezilla",
    icon: (
      <div className="w-[31px] h-[31px] bg-[#a3090e] border-2 border-dotted border-[#5e0508] flex items-center justify-center overflow-hidden">
        <span className="font-['Liberation_Sans',sans-serif] font-bold italic text-[25px] leading-none tracking-[-2px] text-white">Fz</span>
      </div>
    ),
  },
  {
    key: "chrome",
    active: "chrome",
    icon: (
      <svg width="30" height="30" viewBox="0 0 30 30">
        <circle cx="15" cy="15" r="15" fill="#4caf50" />
        <path d="M15 0A15 15 0 0 1 28 7.5H15A7.5 7.5 0 0 0 8.5 11.3L2 7.5A15 15 0 0 1 15 0z" fill="#e53935" />
        <path d="M28 7.5A15 15 0 0 1 15 30L21.5 18.7A7.5 7.5 0 0 0 15 7.5z" fill="#fdd835" />
        <circle cx="15" cy="15" r="7" fill="#fff" />
        <circle cx="15" cy="15" r="5.5" fill="#4a86e8" />
      </svg>
    ),
  },
  {
    key: "explorer",
    active: "explorer",
    icon: (
      <svg width="32" height="32" viewBox="0 0 32 32">
        <path d="M2 5h11l2 2h14v22H2z" fill="#e9c25d" />
        <path d="M4 2h20v8H4z" fill="#f6f6f0" />
        <path d="M5 3h3v2H5z" fill="#3db54a" />
        <path d="M14 4h3v2h-3z" fill="#e04a3a" />
        <path d="M20 5h3v2h-3z" fill="#3d8fe0" />
        <path d="M1 11h30l-2 19H3z" fill="#fbe49a" />
        <path d="M7 28v-7h18v7M10 21v-3h12v3" fill="none" stroke="#9fd6f2" strokeWidth="2" />
      </svg>
    ),
  },
];

function Taskbar() {
  return (
    <div className="h-[40px] shrink-0 relative bg-linear-to-r from-[#2a85c4] to-[#2a8bb3] flex items-center">
      {/* wallpaper stripes behind the taskbar */}
      <svg width="1366" height="40" viewBox="0 0 1366 40" className="absolute left-0 top-0">
        <path d="M172 40L210 0h10L186 40z" fill="#2a6d8f" />
        <path d="M493 40L530 0h13L508 40z" fill="#2a6d8f" />
        <path d="M918 40L955 0h20L935 40z" fill="#2a6d8f" />
      </svg>
      <div className="relative w-[49px] h-full flex items-center justify-center shrink-0">
        <svg width="27" height="27" viewBox="0 0 27 27" fill="#fff">
          <path d="M0 4l11-1.500V13H0zM12.500 2.300L27 0v13H12.500zM0 14.500h11V25L0 23.500zM12.500 14.500H27V27l-14.500-2.300z" />
        </svg>
      </div>
      {taskIcons.map((t) => (
        <div key={t.key} className="relative w-[62px] h-full flex items-center justify-center shrink-0">
          {t.active && (
            <div
              className={`absolute left-[2px] right-px top-[1px] bottom-[1px] border ${
                t.active === "chrome" ? "bg-white/40 border-white/80" : "bg-white/25 border-white/40"
              }`}
            />
          )}
          <div className="relative">{t.icon}</div>
        </div>
      ))}
      <div className="relative ml-auto flex items-center text-white">
        <svg width="16" height="20" viewBox="0 0 16 20" className="mr-[8px]">
          <rect x="2" y="2" width="12" height="11" fill="#777" stroke="#222" />
          <path d="M8 2h6v11H8z" fill="#aaa" />
          <rect x="0.5" y="14" width="15" height="4" rx="1.5" fill="#eee" stroke="#222" />
        </svg>
        <svg width="15" height="18" viewBox="0 0 15 18" className="mr-[9px]">
          <path d="M1 3Q8-1 14 4 16 13 8 17 1 14 1 3z" fill="#7cb518" />
          <path d="M4.5 10l2.5 2 3.5-3.5" stroke="#fff" strokeWidth="1.4" fill="none" />
        </svg>
        <svg width="16" height="19" viewBox="0 0 16 19" className="mr-[8px]">
          <rect width="16" height="19" fill="#c4cde8" />
          <path d="M4 3h8v3H7v2h4v3H7v2h5v3H4z" fill="#5b6fb5" />
        </svg>
        <svg width="16" height="20" viewBox="0 0 16 20" className="mr-[9px]">
          <path d="M2 1v18" stroke="#fff" strokeWidth="1.5" />
          <path d="M3 2h10v7H3z" fill="#fff" />
          <circle cx="10" cy="14" r="5" fill="#d32f2f" />
          <path d="M8 12l4 4M12 12l-4 4" stroke="#fff" />
        </svg>
        <svg width="15" height="20" viewBox="0 0 15 20" className="mr-[8px]" fill="none" stroke="#fff" strokeWidth="1.2">
          <path d="M1 6h4v6H1zM3 12v7M8 4h6v15H8z" />
          <path d="M2 1v4M4 1v4M10 1v3M12 1v3" />
          <path d="M9 8h4v10H9z" fill="#fff" stroke="none" />
        </svg>
        <svg width="16" height="16" viewBox="0 0 16 16" fill="#fff" className="mr-[10px]">
          <path d="M0 13h2v3H0zM3.5 10h2v6h-2zM7 7h2v9H7zM10.5 4h2v12h-2zM14 1h2v15h-2z" />
        </svg>
        <svg width="14" height="16" viewBox="0 0 14 16" className="mr-[15px]">
          <path d="M0 5h3l4-4v14l-4-4H0z" fill="#fff" />
          <path d="M10 4q3 4 0 8" stroke="#cfe6f5" fill="none" />
        </svg>
        <span className={`${ui} text-[12px] w-[39px]`}>ENG</span>
        <div className={`${ui} text-[12px] leading-[18px] w-[52px] mr-[17px] text-center whitespace-nowrap`}>
          <div>6:59 PM</div>
          <div>24/7/2017</div>
        </div>
      </div>
    </div>
  );
}

export default function App() {
  return (
    <div className="relative w-[1366px] h-[768px] overflow-hidden flex flex-col">
      <TitleBar />
      <Toolbar />
      <BookmarksBar />
      <div className="flex-1 min-h-0 flex">
        <Sidebar />
        <Main />
        <Scrollbar thumb="h-[340px]" />
      </div>
      <Taskbar />

      {/* annotations drawn over the screenshot */}
      <div className="absolute left-[8px] top-[192px] w-[290px] h-[58px] border-[5px] border-[#ed1c24]" />
      <div className="absolute left-[1113px] top-[259px] w-[204px] h-[54px] border-[5px] border-[#ed1c24]" />
      <div className={`${ui} absolute left-[298px] top-[287px] w-[900px] text-[41px] leading-[58px] text-[#ed1c24]`}>
        chọn app releases ra giao diện này -&gt; manage production
      </div>
    </div>
  );
}
